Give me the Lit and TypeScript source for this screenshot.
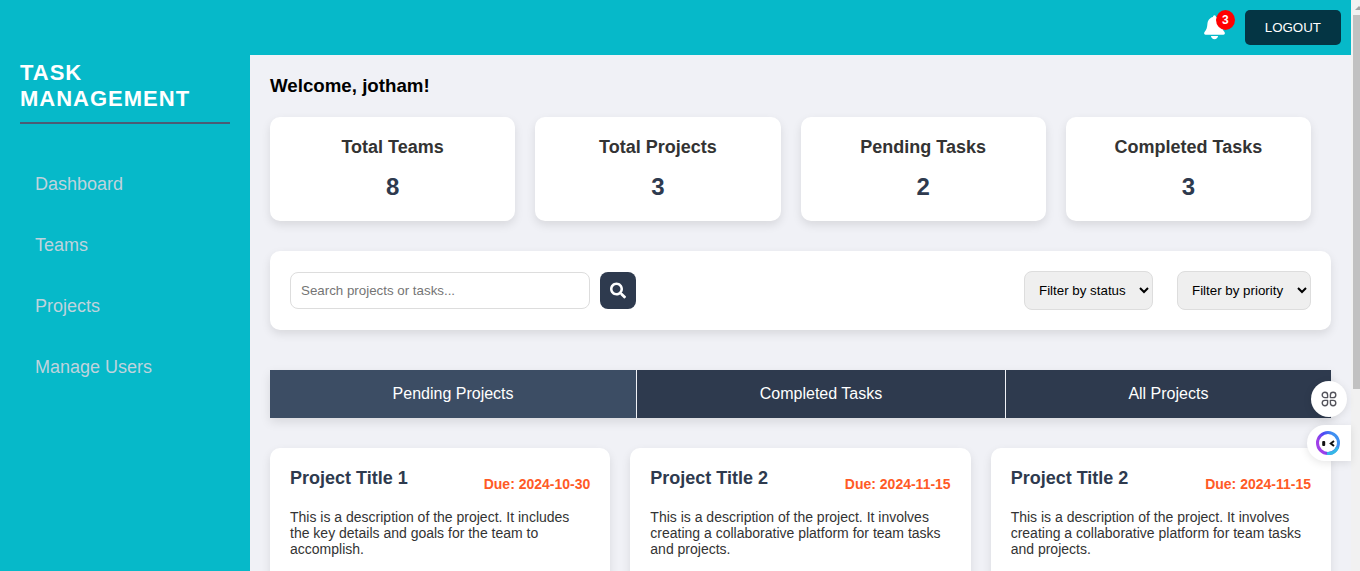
import { LitElement, html, css, svg } from "lit";
import { customElement } from "lit/decorators.js";

interface Stat { label: string; value: number }
interface Project { title: string; due: string; text: string }

const NAV = ["Dashboard", "Teams", "Projects", "Manage Users"];
const TABS = ["Pending Projects", "Completed Tasks", "All Projects"];
const STATS: Stat[] = [
  { label: "Total Teams", value: 8 },
  { label: "Total Projects", value: 3 },
  { label: "Pending Tasks", value: 2 },
  { label: "Completed Tasks", value: 3 },
];
const PLATFORM =
  "This is a description of the project. It involves creating a collaborative platform for team tasks and projects.";
const PROJECTS: Project[] = [
  {
    title: "Project Title 1",
    due: "2024-10-30",
    text: "This is a description of the project. It includes the key details and goals for the team to accomplish.",
  },
  { title: "Project Title 2", due: "2024-11-15", text: PLATFORM },
  { title: "Project Title 2", due: "2024-11-15", text: PLATFORM },
];

const bellIcon = svg`<svg class="bell-icon" viewBox="0 0 21 25" aria-hidden="true"><path fill="#fff" d="M10.500 0.300C9.500 0.300 9.100 1 9 2C5.500 2.700 3.700 5.600 3.400 9C3.100 12.500 2.800 14.400 0.700 16.800C-0.300 18.200 0 19.700 1.600 19.700H19.400C21 19.700 21.300 18.200 20.300 16.800C18.200 14.400 17.900 12.500 17.600 9C17.300 5.600 15.500 2.700 12 2C11.900 1 11.500 0.300 10.500 0.300ZM6.900 21H14.100C13.800 23 12.400 24.200 10.500 24.200S7.200 23 6.900 21Z"/></svg>`;

const searchIcon = svg`<svg class="search-icon" viewBox="0 0 512 512" aria-hidden="true"><path fill="#fff" d="M505 442.700L405.300 343c-4.500-4.500-10.600-7-17-7H372c27.600-35.300 44-79.700 44-128C416 93.100 322.900 0 208 0S0 93.100 0 208s93.100 208 208 208c48.300 0 92.700-16.400 128-44v16.300c0 6.400 2.500 12.500 7 17l99.700 99.700c9.400 9.400 24.600 9.400 33.900 0l28.300-28.300c9.400-9.400 9.400-24.600.1-34zM208 336c-70.700 0-128-57.200-128-128 0-70.700 57.200-128 128-128 70.700 0 128 57.200 128 128 0 70.700-57.200 128-128 128z"/></svg>`;

const cloverIcon = svg`<svg width="16" height="16" viewBox="0 0 16 16" aria-hidden="true" fill="none" stroke="#54545c" stroke-width="1.400"><path d="M6.600 6.600H3.900A2.700 2.700 0 1 1 6.600 3.900ZM9.400 6.600V3.900A2.700 2.700 0 1 1 12.100 6.600ZM6.600 9.400V12.100A2.700 2.700 0 1 1 3.900 9.400ZM9.400 9.400H12.100A2.700 2.700 0 1 1 9.400 12.100Z" stroke-linejoin="round"/></svg>`;

const faceIcon = svg`<svg width="24" height="24" viewBox="0 0 24 24" aria-hidden="true">
  <defs><linearGradient id="ring" x1="0.200" y1="0.800" x2="0.900" y2="0.500"><stop offset="0" stop-color="#a040e8"/><stop offset="0.500" stop-color="#4a48f5"/><stop offset="1" stop-color="#3f90f0"/></linearGradient></defs>
  <circle cx="12" cy="12" r="10.500" fill="#fff" stroke="url(#ring)" stroke-width="3"/>
  <path d="M21.500 16.500A10.500 10.500 0 0 1 11 22.500" fill="none" stroke="#35b8e6" stroke-width="3"/>
  <rect x="6.200" y="10" width="3" height="5" rx="1" fill="#111"/>
  <path d="M18 10L14.800 12.500L18 15" fill="none" stroke="#111" stroke-width="2"/>
</svg>`;

@customElement("app-root")
export class AppRoot extends LitElement {
  static styles = css`
    :host {
      display: flex;
      height: 100vh;
      overflow: hidden;
      background: #f0f1f6;
      color: #333;
      font-family: "Liberation Sans", Arial, sans-serif;
    }
    * { box-sizing: border-box; }
    h1, h2, h3, p, ul { margin: 0; padding: 0; }
    button, input, select { font-family: inherit; }
    a { text-decoration: none; color: inherit; }

    .sidebar {
      flex: 0 0 250px;
      padding: 60px 20px 20px;
      background: #06b9c9;
    }
    .brand {
      padding-bottom: 10px;
      border-bottom: 2px solid #4b5c74;
      color: #fff;
      font-size: 22px;
      line-height: 26px;
      letter-spacing: 1px;
    }
    .nav {
      display: flex;
      flex-direction: column;
      gap: 20px;
      margin-top: 40px;
      list-style: none;
    }
    .nav-link {
      display: block;
      padding: 10px 15px;
      color: #bfd3dd;
      font-size: 18px;
      line-height: 21px;
    }

    .page {
      flex: 1;
      min-width: 0;
      display: flex;
      flex-direction: column;
    }
    .topbar {
      display: flex;
      flex: none;
      justify-content: flex-end;
      align-items: center;
      gap: 20px;
      padding: 10px;
      background: #06b9c9;
    }
    .bell {
      position: relative;
      display: flex;
      padding: 0;
      border: 0;
      background: none;
    }
    .bell-icon { width: 21px; height: 25px; }
    .badge {
      position: absolute;
      top: -5px;
      right: -10px;
      width: 19px;
      border-radius: 50%;
      background: #f00;
      color: #fff;
      font-size: 12px;
      font-weight: 700;
      line-height: 20px;
      text-align: center;
    }
    .logout {
      padding: 10px 20px;
      border: 0;
      border-radius: 5px;
      background: #043544;
      color: #fff;
      line-height: 15px;
    }

    .content { padding: 20px; }
    .welcome {
      color: #000;
      line-height: 22px;
    }
    .card {
      border-radius: 10px;
      background: #fff;
      box-shadow: 0 4px 10px rgba(0, 0, 0, 0.1);
    }
    .stats {
      display: grid;
      grid-template-columns: repeat(4, 1fr);
      gap: 20px;
      margin: 20px 20px 30px 0;
    }
    .stat {
      padding: 20px;
      text-align: center;
    }
    .stat-label {
      font-size: 18px;
      line-height: 20px;
    }
    .stat-value {
      margin-top: 16px;
      color: #2e3a4e;
      font-size: 24px;
      font-weight: 700;
      line-height: 28px;
    }

    .toolbar {
      display: flex;
      justify-content: space-between;
      align-items: center;
      padding: 20px;
    }
    .search, .filters { display: flex; align-items: center; }
    .search { gap: 10px; }
    .filters { gap: 24px; }
    .search-box {
      width: 300px;
      padding: 10px;
      border: 1px solid #ddd;
      border-radius: 8px;
      line-height: 15px;
    }
    .search-btn {
      display: flex;
      padding: 10px;
      border: 0;
      border-radius: 8px;
      background: #2e3a4e;
    }
    .search-icon { width: 16px; height: 17px; }
    .filter {
      height: 39px;
      padding: 10px;
      border: 1px solid #ddd;
      border-radius: 8px;
      background: #efefef;
      color: #000;
    }

    .tabs {
      display: flex;
      margin: 40px 0 30px;
      box-shadow: 0 4px 10px rgba(0, 0, 0, 0.1);
    }
    .tab {
      flex: 1 1 auto;
      padding: 15px 0;
      border: 0;
      background: #2e3a4e;
      color: #fff;
      font-size: 16px;
      line-height: 18px;
    }
    .tab + .tab { border-left: 1px solid #f0f1f6; }
    .tab.active { background: #3c4d64; }

    .projects {
      display: grid;
      grid-template-columns: repeat(3, 1fr);
      gap: 20px;
    }
    .project { padding: 20px 20px 40px; }
    .project-head {
      display: flex;
      justify-content: space-between;
      align-items: flex-end;
    }
    .project-title {
      padding-bottom: 4px;
      color: #2e3a4e;
      font-size: 18px;
      line-height: 20px;
    }
    .due {
      color: #ff5a26;
      font-size: 14px;
      font-weight: 700;
      line-height: 16px;
    }
    .project-text {
      margin-top: 17px;
      font-size: 14px;
      line-height: 16px;
    }

    .scrollbar {
      flex: 0 0 9px;
      display: flex;
      flex-direction: column;
      padding-left: 2px;
      background: #f1f1f1;
    }
    .arrow { height: 15px; }
    .thumb { height: 65.5%; background: #c1c1c1; }

    .dock {
      position: absolute;
      top: 381px;
      right: 9px;
      display: flex;
      flex-direction: column;
      align-items: flex-end;
      gap: 8px;
    }
    .dock-btn {
      display: flex;
      align-items: center;
      height: 36px;
      border: 0;
      background: #fff;
      box-shadow: 0 2px 8px rgba(0, 0, 0, 0.1);
    }
    .round {
      justify-content: center;
      width: 36px;
      margin-right: 4px;
      padding: 0;
      border-radius: 50%;
    }
    .pill {
      width: 44px;
      padding: 0 9px;
      border-radius: 18px 0 0 18px;
    }
  `;

  render() {
    return html`
      <aside class="sidebar">
        <h1 class="brand">TASK MANAGEMENT</h1>
        <nav>
          <ul class="nav">
            ${NAV.map((n) => html`<li><a class="nav-link" href="#">${n}</a></li>`)}
          </ul>
        </nav>
      </aside>
      <div class="page">
        <header class="topbar">
          <button class="bell" aria-label="Notifications">${bellIcon}<span class="badge">3</span></button>
          <button class="logout">LOGOUT</button>
        </header>
        <main class="content">
          <h3 class="welcome">Welcome, jotham!</h3>
          <section class="stats">
            ${STATS.map(
              (s) => html`<div class="card stat">
                <h3 class="stat-label">${s.label}</h3>
                <p class="stat-value">${s.value}</p>
              </div>`
            )}
          </section>
          <section class="card toolbar">
            <form class="search">
              <input class="search-box" type="text" aria-label="Search" placeholder="Search projects or tasks..." />
              <button class="search-btn" type="button" aria-label="Search">${searchIcon}</button>
            </form>
            <div class="filters">
              <select class="filter" aria-label="Status"><option>Filter by status</option></select>
              <select class="filter" aria-label="Priority"><option>Filter by priority</option></select>
            </div>
          </section>
          <div class="tabs">
            ${TABS.map((t, i) => html`<button class="tab ${i === 0 ? "active" : ""}">${t}</button>`)}
          </div>
          <section class="projects">
            ${PROJECTS.map(
              (p) => html`<article class="card project">
                <div class="project-head">
                  <h3 class="project-title">${p.title}</h3>
                  <span class="due">Due: ${p.due}</span>
                </div>
                <p class="project-text">${p.text}</p>
              </article>`
            )}
          </section>
        </main>
      </div>
      <div class="scrollbar" aria-hidden="true">
        <svg class="arrow" viewBox="0 0 7 15"><path d="M2 10L6 6L7 7V10Z" fill="#a3a3a3" /></svg>
        <div class="thumb"></div>
      </div>
      <div class="dock">
        <button class="dock-btn round" aria-label="Apps">${cloverIcon}</button>
        <button class="dock-btn pill" aria-label="Assistant">${faceIcon}</button>
      </div>
    `;
  }
}
